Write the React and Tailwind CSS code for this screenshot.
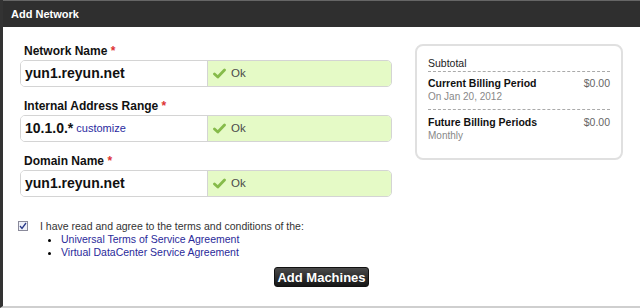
function Field({label, children}) {
    return (
        <div className="mb-[12px]">
            <div className="text-[12px] font-bold text-[#111] leading-[14px] mb-[2px] pl-[4px]">
                {label} <span className="text-[#d33]">*</span>
            </div>
            <div className="flex h-[27px] w-[372px] border border-[#d4d4d4] rounded-[5px] overflow-hidden">
                <div className="w-[187px] bg-white flex items-center pl-[4px] border-r border-[#d4d4d4]">
                    {children}
                </div>
                <div className="flex-1 bg-[#e5fac6] flex items-center pl-[5px] gap-[5px] text-[11.5px] text-[#4a4a4a]">
                    <svg width="13" height="11" viewBox="0 0 13 11">
                        <path d="M1.5 6 L4.8 9 L11.5 2" fill="none" stroke="#86bb4a" strokeWidth="2.8" strokeLinecap="round" strokeLinejoin="round"/>
                    </svg>
                    <span>Ok</span>
                </div>
            </div>
        </div>
    )
}

export default function App() {
    return (
        <div className="w-[640px] h-[308px] bg-white overflow-hidden border-l-[3px] border-[#333] border-b-[2px] border-b-[#cfcfcf] font-['Liberation_Sans',Arial,sans-serif] flex flex-col">
            <div className="h-[27px] bg-[#2f2f2f] border-t border-[#666] flex items-center pl-[8px] text-white text-[11px] font-bold shrink-0">
                Add Network
            </div>
            <div className="flex flex-1">
                <div className="pl-[17px] pt-[17px] w-[400px]">
                    <Field label="Network Name">
                        <span className="text-[14px] font-bold text-[#111]">yun1.reyun.net</span>
                    </Field>
                    <Field label="Internal Address Range">
                        <span className="text-[14px] font-bold text-[#111]">10.1.0.*</span>
                        <span className="text-[11px] text-[#2a2aa0] ml-[3px]">customize</span>
                    </Field>
                    <Field label="Domain Name">
                        <span className="text-[14px] font-bold text-[#111]">yun1.reyun.net</span>
                    </Field>
                    <div className="mt-[23px] flex items-start ml-[-2px]">
                        <div className="w-[10px] h-[10px] border border-[#8a8a9a] bg-[#eef0f8] mt-[1px] mr-[12px] flex items-center justify-center shrink-0">
                            <svg width="8" height="8" viewBox="0 0 8 8">
                                <path d="M1 4 L3 6.5 L7 1" fill="none" stroke="#2a3a8a" strokeWidth="1.3"/>
                            </svg>
                        </div>
                        <div className="text-[10.5px] text-[#333] leading-[13px]">
                            <div>I have read and agree to the terms and conditions of the:</div>
                            <ul className="pl-[21px] list-disc text-[#2a2a9a] leading-[13px]">
                                <li className="marker:text-black">Universal Terms of Service Agreement</li>
                                <li className="marker:text-black">Virtual DataCenter Service Agreement</li>
                            </ul>
                        </div>
                    </div>
                    <div className="flex justify-end pr-[34px] mt-[8px]">
                        <button className="h-[20px] w-[95px] rounded-[3px] border border-[#111] bg-gradient-to-b from-[#4a4a4a] to-[#161616] text-white text-[13px] font-bold leading-none">
                            Add Machines
                        </button>
                    </div>
                </div>
                <div className="pt-[17px] pl-[12px]">
                    <div className="w-[208px] border-2 border-[#e0e0e0] rounded-[8px] px-[11px] pt-[11px] pb-[16px] text-[10.5px] leading-[13px]">
                        <div className="text-[#222] pb-[1px] border-b border-dashed border-[#aaa]">Subtotal</div>
                        <div className="flex justify-between pt-[5px] pb-[6px] border-b border-dashed border-[#aaa]">
                            <div>
                                <div className="font-bold text-[10.5px] text-[#111]">Current Billing Period</div>
                                <div className="text-[#888] text-[10px]">On Jan 20, 2012</div>
                            </div>
                            <div className="text-[#666]">$0.00</div>
                        </div>
                        <div className="flex justify-between pt-[6px]">
                            <div>
                                <div className="font-bold text-[10.5px] text-[#111]">Future Billing Periods</div>
                                <div className="text-[#888] text-[10px]">Monthly</div>
                            </div>
                            <div className="text-[#666]">$0.00</div>
                        </div>
                    </div>
                </div>
            </div>
        </div>
    )
}
